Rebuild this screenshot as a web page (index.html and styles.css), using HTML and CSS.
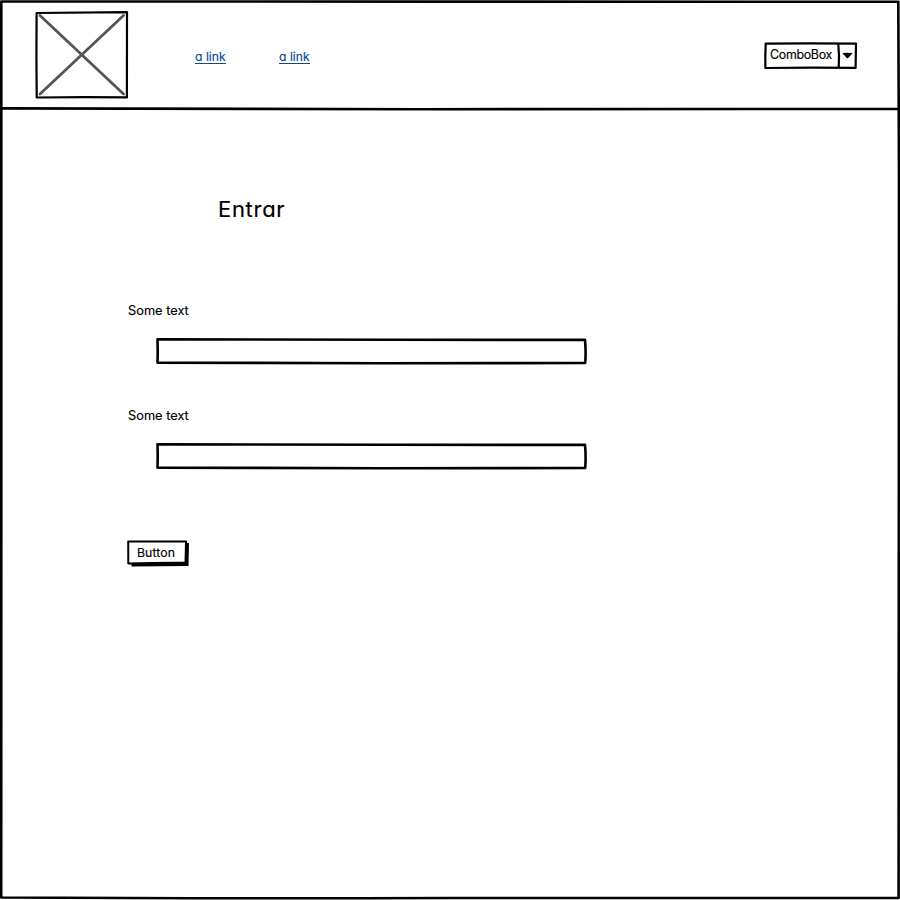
FILE: index.html
```html
<!DOCTYPE html>
<html lang="pt">
<head>
<meta charset="utf-8">
<title>Entrar</title>
<link rel="stylesheet" href="styles.css">
</head>
<body>
<div class="page">
  <svg class="sketch" viewBox="0 0 900 900"><path d="M1.300 1.500 Q250 .7 450 1.600 T898.300 1.800 Q898.200 60 899 180 Q897.600 450 898.600 898 Q650 898.800 450 898 Q220 898.800 1.200 897.500 Q.8 700 1.300 500 Q2 300 1.300 1.500"/></svg>
  <header class="header">
    <svg class="sketch" viewBox="0 0 900 110"><path d="M1 108.400 Q220 109.700 420 109.200 T898 109"/></svg>
    <svg class="logo" viewBox="0 0 94 88"><path class="cross" d="M5 4.500 L88.500 83 M88.500 4.500 L5 83"/><path class="box" d="M1.600 2 Q46 1.500 92 1.200 L91.900 86.400 Q45 85.900 1.700 86.500 Q1.200 45 1.600 2Z"/></svg>
    <nav class="nav"><a href="#">a link</a><a href="#">a link</a></nav>
    <div class="combo">
      <svg class="sketch" viewBox="0 0 94 28"><path class="thin" d="M1.700 1.700 Q45 .9 92 1.700 L91.600 25.900 Q45 25.200 1.400 26 Q1.100 14 1.700 1.700Z M74.300 2 Q75.500 14 74.700 26"/><path class="arrow" d="M78.300 11 Q83.500 10.400 88.700 11 L84.700 15.600 Q83.500 16.700 82.300 15.600Z"/></svg>
      <span>ComboBox</span>
    </div>
  </header>
  <main class="main">
    <h1>Entrar</h1>
    <form>
      <label for="first">Some text</label>
      <div class="field">
        <svg class="sketch" viewBox="0 0 432 28"><path d="M2.500 1.300 Q160 1.400 235 1.800 T430 1.900 Q431.100 14 430.200 25 Q330 25.200 225 25.300 Q100 25.100 2.500 24.600 Q2.900 14 2.500 1.300Z"/></svg>
        <input id="first" type="text">
      </div>
      <label for="second">Some text</label>
      <div class="field">
        <svg class="sketch" viewBox="0 0 432 28"><path d="M2.500 1.300 Q160 1.400 235 1.800 T430 1.900 Q431.100 14 430.200 25 Q330 25.200 225 25.300 Q100 25.100 2.500 24.600 Q2.900 14 2.500 1.300Z"/></svg>
        <input id="second" type="text">
      </div>
      <button type="button">
        <svg class="sketch" viewBox="0 0 62 28"><path class="shadow" d="M4 4 L62 3 L61.500 26 L4.500 26.500Z"/><path class="face" d="M1.200 1.600 L59 1.600 L58.500 22.700 Q30 22.500 1.300 23.500Z"/></svg>
        <span>Button</span>
      </button>
    </form>
  </main>
</div>
</body>
</html>
```
FILE: styles.css
```css
* { box-sizing: border-box; }
body { margin: 0; background: #fff; color: #000; font: 12.8px/16px Inter, "Open Sans", sans-serif; font-feature-settings: "cv11"; -webkit-text-stroke: .15px; }
.page { position: relative; height: 900px; overflow: hidden; }
.sketch { position: absolute; inset: 0; width: 100%; height: 100%; overflow: visible; pointer-events: none; }
svg path { fill: none; stroke: #000; stroke-width: 2.6; stroke-linejoin: round; stroke-linecap: round; }
svg .thin, svg .box { stroke-width: 2.2; }
svg .cross { stroke: #555; stroke-width: 2.8; }
svg .arrow, svg .shadow { fill: #000; stroke: none; }
svg .face { fill: #fff; stroke-width: 2; }
.header { position: relative; display: flex; height: 110px; padding: 11px 42px 0 35px; }
.logo { width: 94px; height: 88px; }
.nav { display: flex; gap: 53px; margin: 38px 0 0 66px; }
.nav a { height: 15px; width: 31px; color: #0b4a91; text-decoration: none; border-bottom: 1px solid #0b4a91; line-height: 15px; font-size: 12.2px; white-space: nowrap; }
.combo { position: relative; width: 94px; height: 28px; margin: 31px 0 0 auto; padding: 5px 0 0 6px; font-size: 12.4px; letter-spacing: -.3px; }
.combo span, button span { position: relative; }
.main { padding: 85px 0 0 127px; }
h1 { margin: 0 0 78px 91px; font-size: 22px; line-height: 29px; font-weight: 400; letter-spacing: .7px; }
label { display: block; height: 16px; line-height: 18px; padding-left: 1px; }
.field { position: relative; width: 432px; height: 28px; margin: 20px 0 41px 28px; }
.field input { width: 100%; height: 100%; padding: 3px 8px; border: 0; outline: 0; background: transparent; font: inherit; }
button { position: relative; display: block; width: 62px; height: 28px; margin: 69px 0 0; padding: 0 4px 3px 0; border: 0; background: transparent; color: #000; font: inherit; font-size: 12.3px; letter-spacing: .1px; font-feature-settings: inherit; }
```
